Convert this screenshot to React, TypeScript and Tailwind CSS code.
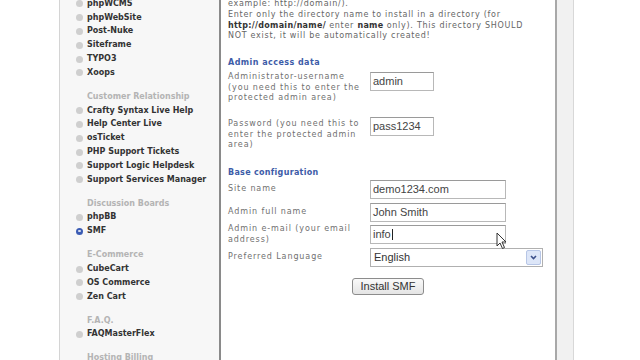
import React from "react"

type SideEntry = { label: string; heading?: boolean; active?: boolean }

const sidebar: SideEntry[] = [
  { label: "phpWCMS" },
  { label: "phpWebSite" },
  { label: "Post-Nuke" },
  { label: "Siteframe" },
  { label: "TYPO3" },
  { label: "Xoops" },
  { label: "Customer Relationship", heading: true },
  { label: "Crafty Syntax Live Help" },
  { label: "Help Center Live" },
  { label: "osTicket" },
  { label: "PHP Support Tickets" },
  { label: "Support Logic Helpdesk" },
  { label: "Support Services Manager" },
  { label: "Discussion Boards", heading: true },
  { label: "phpBB" },
  { label: "SMF", active: true },
  { label: "E-Commerce", heading: true },
  { label: "CubeCart" },
  { label: "OS Commerce" },
  { label: "Zen Cart" },
  { label: "F.A.Q.", heading: true },
  { label: "FAQMasterFlex" },
  { label: "Hosting Billing", heading: true },
]

function Bullet({ active }: { active?: boolean }) {
  if (active) {
    return (
      <span className="w-[7px] h-[7px] rounded-full bg-[#3b5cb4] flex items-center justify-center shrink-0">
        <span className="w-[3px] h-[2px] rounded-full bg-white/80" />
      </span>
    )
  }
  return <span className="w-[7px] h-[7px] rounded-full bg-[#cfcfcf] shrink-0" />
}

function Sidebar() {
  return (
    <div className="w-[160px] shrink-0 border-l border-[#d4d4d4] bg-[#f7f7f7] pl-[16px] overflow-hidden">
      <div className="mt-[-3px]">
        {sidebar.map((item) =>
          item.heading ? (
            <div
              key={item.label}
              className="h-[13.8px] mt-[10.2px] pl-[11px] flex items-center text-[8px] font-bold text-[#b4b4b4] whitespace-nowrap"
            >
              {item.label}
            </div>
          ) : (
            <div key={item.label} className="h-[13.8px] flex items-center gap-[4px] whitespace-nowrap">
              <Bullet active={item.active} />
              <span className="text-[8px] font-bold text-[#333]">{item.label}</span>
            </div>
          )
        )}
      </div>
    </div>
  )
}

function TextInput({ value, width, caret }: { value: string; width: string; caret?: boolean }) {
  return (
    <div
      className={`${width} h-[19px] border border-[#b8b8b8] border-t-[#9a9a9a] bg-white flex items-center pl-[2px] text-[11px] text-[#444]`}
      style={{ fontFamily: '"Liberation Sans", Arial, sans-serif' }}
    >
      {value}
      {caret && <span className="w-px h-[11px] bg-[#222] ml-px" />}
    </div>
  )
}

function Row({ label, children, className }: { label: React.ReactNode; children: React.ReactNode; className: string }) {
  return (
    <div className={`flex ${className}`}>
      <div className="w-[142px] shrink-0 text-[8px] leading-[10.7px] text-[#707070] tracking-[0.9px]">{label}</div>
      {children}
    </div>
  )
}

function Main() {
  return (
    <div className="w-[336px] shrink-0 border-l-2 border-[#8a8a8a] bg-white pl-[7px] overflow-hidden">
      <div className="mt-[-1px] text-[8px] leading-[10.8px] text-[#666] tracking-[0.72px]">
        <div>example: http://domain/).</div>
        <div>Enter only the directory name to install in a directory (for</div>
        <div className="whitespace-nowrap">
          <b className="text-[#333] tracking-[0.3px]">http://domain/name/</b> enter <b className="text-[#333] tracking-[0.3px]">name</b> only). This directory SHOULD
        </div>
        <div>NOT exist, it will be automatically created!</div>
      </div>

      <div className="mt-[16px] text-[8px] leading-[10.7px] font-bold text-[#3d5ca8] tracking-[0.45px]">Admin access data</div>
      <Row
        className="mt-[3px] items-start"
        label={
          <>
            Administrator-username
            <br />
            (you need this to enter the
            <br />
            protected admin area)
          </>
        }
      >
        <TextInput value="admin" width="w-[64px]" />
      </Row>
      <Row
        className="mt-[15px] items-start"
        label={
          <>
            Password (you need this to
            <br />
            enter the protected admin
            <br />
            area)
          </>
        }
      >
        <div className="mt-[-2px]">
          <TextInput value="pass1234" width="w-[64px]" />
        </div>
      </Row>

      <div className="mt-[17px] text-[8px] leading-[10.7px] font-bold text-[#3d5ca8] tracking-[0.3px]">Base configuration</div>
      <Row className="mt-[1px] items-center" label="Site name">
        <TextInput value="demo1234.com" width="w-[136px]" />
      </Row>
      <Row className="mt-[4px] items-center" label="Admin full name">
        <TextInput value="John Smith" width="w-[136px]" />
      </Row>
      <Row
        className="mt-[2px] items-center"
        label={
          <>
            Admin e-mail (your email
            <br />
            address)
          </>
        }
      >
        <TextInput value="info" width="w-[136px]" caret />
      </Row>
      <Row className="mt-[3px] items-center" label="Preferred Language">
        <div
          className="w-[173px] h-[19px] border border-[#b0b0b0] bg-white flex items-center justify-between pl-[3px] pr-[1px] text-[11px] text-[#333]"
          style={{ fontFamily: '"Liberation Sans", Arial, sans-serif' }}
        >
          <span>English</span>
          <span className="w-[15px] h-[15px] rounded-[2px] border border-[#b7c6e6] bg-[#dde6f8] flex items-center justify-center">
            <svg width="7" height="5" viewBox="0 0 7 5">
              <path d="M1 1 L3.5 3.5 L6 1" stroke="#3b4f8a" strokeWidth="1.6" fill="none" />
            </svg>
          </span>
        </div>
      </Row>

      <div className="mt-[11px] flex justify-center pr-[7px]">
        <div
          className="w-[72px] h-[17px] rounded-[3px] border border-[#8c8c8c] bg-gradient-to-b from-[#fafafa] to-[#e4e4e4] flex items-center justify-center text-[11px] text-[#333]"
          style={{ fontFamily: '"Liberation Sans", Arial, sans-serif' }}
        >
          Install SMF
        </div>
      </div>
    </div>
  )
}

export default function App() {
  return (
    <div
      className="relative w-[640px] h-[360px] bg-white flex overflow-hidden"
      style={{ fontFamily: '"DejaVu Sans", Verdana, sans-serif' }}
    >
      <div className="w-[59px] shrink-0" />
      <Sidebar />
      <Main />
      <div className="w-[19px] shrink-0 border-l-2 border-[#a8a8a8] border-r border-r-[#d8d8d8] bg-[#f1f1f1]" />
      <div className="flex-1" />

      <svg className="absolute left-[496px] top-[232px]" width="11" height="18" viewBox="0 0 11 18">
        <path d="M1 1 L1 14 L4 11 L6.5 16.5 L8.5 15.5 L6 10 L10 10 Z" fill="#fff" stroke="#333" strokeWidth="1" strokeLinejoin="round" />
      </svg>
    </div>
  )
}
